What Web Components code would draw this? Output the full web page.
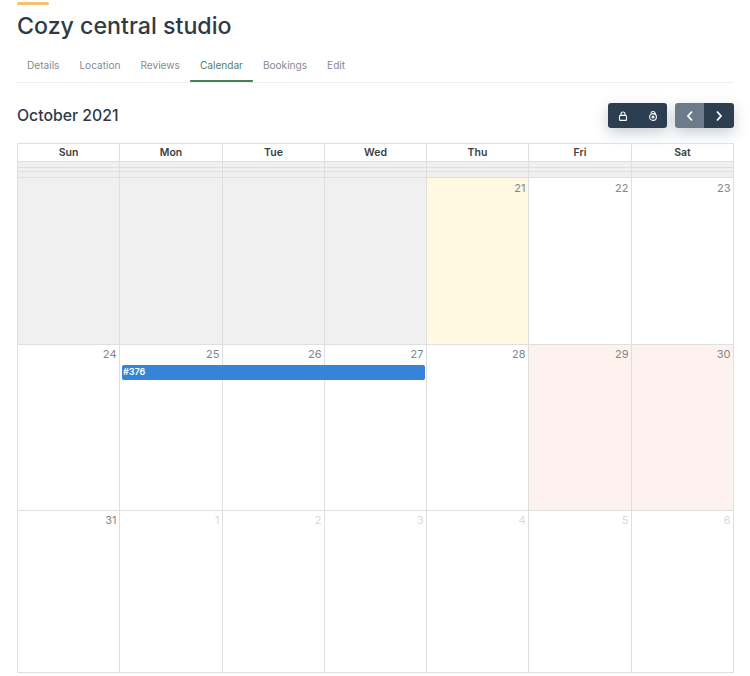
<!DOCTYPE html>
<html>
<head>
<meta charset="utf-8">
<title>Calendar</title>
<style>
    html, body { margin: 0; background: #fff; }
    body { font-family: "Inter", "Liberation Sans", sans-serif; }
</style>
</head>
<body>
<listing-page>
    <listing-header title="Cozy central studio"></listing-header>
    <listing-tabs active="Calendar"></listing-tabs>
    <month-toolbar month="October 2021"></month-toolbar>
    <month-calendar></month-calendar>
</listing-page>

<script>
class ListingPage extends HTMLElement {
    constructor() {
        super();
        this.attachShadow({ mode: "open" });
        this.shadowRoot.innerHTML = `
            <style>
                :host {
                    display: block;
                    width: 717px;
                    margin-left: 17px;
                }
            </style>
            <slot></slot>
        `;
    }
}

class ListingHeader extends HTMLElement {
    constructor() {
        super();
        this.attachShadow({ mode: "open" });
        this.shadowRoot.innerHTML = `
            <style>
                :host { display: block; }
                .bar {
                    width: 32px;
                    height: 3px;
                    margin-top: 2px;
                    background: #f6c06c;
                    border-radius: 2px;
                }
                h1 {
                    margin: 5px 0 0;
                    height: 33px;
                    font: 500 23.2px/33px "Inter", sans-serif;
                    color: #2f3a47;
                }
            </style>
            <div class="bar"></div>
            <h1>${this.getAttribute("title")}</h1>
        `;
    }
}

class ListingTabs extends HTMLElement {
    constructor() {
        super();
        this.attachShadow({ mode: "open" });
        const active = this.getAttribute("active");
        const tabs = ["Details", "Location", "Reviews", "Calendar", "Bookings", "Edit"];
        this.shadowRoot.innerHTML = `
            <style>
                :host {
                    display: flex;
                    height: 37px;
                    margin-top: 2px;
                    border-bottom: 1px solid #eef0f0;
                }
                a {
                    display: block;
                    padding: 10px 10px 0;
                    font-size: 10.1px;
                    line-height: 20px;
                    color: #858b93;
                    box-sizing: border-box;
                    height: 37px;
                }
                a.active {
                    color: #55815f;
                    border-bottom: 2px solid #4a8058;
                    border-radius: 1px;
                }
            </style>
            ${tabs.map(t => `<a class="${t === active ? "active" : ""}">${t}</a>`).join("")}
        `;
    }
}

class MonthToolbar extends HTMLElement {
    constructor() {
        super();
        this.attachShadow({ mode: "open" });
        this.shadowRoot.innerHTML = `
            <style>
                :host {
                    display: flex;
                    align-items: center;
                    justify-content: space-between;
                    height: 25px;
                    margin-top: 20px;
                    margin-bottom: 15px;
                }
                h2 {
                    margin: 0;
                    font: 500 15.8px/25px "Inter", sans-serif;
                    color: #2f3a47;
                }
                .groups { display: flex; gap: 8px; }
                .group {
                    display: flex;
                    height: 25px;
                    border-radius: 3px;
                    overflow: hidden;
                    box-shadow: 0 5px 14px rgba(44, 62, 80, 0.25);
                }
                button {
                    all: unset;
                    display: flex;
                    align-items: center;
                    justify-content: center;
                    width: 29px;
                    background: #2c3e50;
                    color: #fff;
                }
                button.wide { width: 30px; }
                button.dim { background: #6c7a89; }
                svg { display: block; fill: none; stroke: currentColor; }
            </style>
            <h2>${this.getAttribute("month")}</h2>
            <div class="groups">
                <div class="group">
                    <button class="wide" aria-label="Lock">
                        <svg width="10" height="10" viewBox="0 0 10 10" stroke-width="1.1">
                            <rect x="1.5" y="4.4" width="7" height="5" rx="1"/>
                            <path d="M3 4.4V3a2 2 0 0 1 4 0v1.4"/>
                        </svg>
                    </button>
                    <button aria-label="Unlock">
                        <svg width="10" height="11" viewBox="0 0 10 11" stroke-width="1.1">
                            <circle cx="5" cy="7" r="3.4"/>
                            <circle cx="5" cy="7" r="1"/>
                            <path d="M2.8 3.2a2.3 2.3 0 0 1 4.4 0v1.2"/>
                        </svg>
                    </button>
                </div>
                <div class="group">
                    <button class="dim" aria-label="Previous">
                        <svg width="8" height="12" viewBox="0 0 8 12" stroke-width="1.8">
                            <path d="M6 1.5 2 6l4 4.5"/>
                        </svg>
                    </button>
                    <button class="wide" aria-label="Next">
                        <svg width="8" height="12" viewBox="0 0 8 12" stroke-width="1.8">
                            <path d="M2 1.5 6 6l-4 4.5"/>
                        </svg>
                    </button>
                </div>
            </div>
        `;
    }
}

class CalendarDay extends HTMLElement {
    constructor() {
        super();
        this.attachShadow({ mode: "open" });
        this.shadowRoot.innerHTML = `
            <style>
                :host {
                    display: block;
                    box-sizing: border-box;
                    min-width: 0;
                    padding: var(--day-top, 2px) 2.5px 0 0;
                    border-right: 1px solid #dfdfdf;
                    border-bottom: 1px solid #dfdfdf;
                    text-align: right;
                    font-size: 11px;
                    line-height: 14px;
                    color: #83878c;
                }
                :host(:last-child) { border-right: 0; }
                :host([last]) { border-bottom: 0; }
                :host([state="past"]) { background: #f0f0f0; }
                :host([state="today"]) { background: #fef9e0; }
                :host([state="weekend"]) { background: #fef2ef; }
                :host([state="other"]) { color: #d8dadc; }
            </style>
            <slot></slot>
        `;
    }
}

class MonthCalendar extends HTMLElement {
    constructor() {
        super();
        this.attachShadow({ mode: "open" });
        const names = ["Sun", "Mon", "Tue", "Wed", "Thu", "Fri", "Sat"];
        const weeks = [
            [["", "past"], ["", "past"], ["", "past"], ["", "past"], ["21", "today"], ["22", ""], ["23", ""]],
            [["24", ""], ["25", ""], ["26", ""], ["27", ""], ["28", ""], ["29", "weekend"], ["30", "weekend"]],
            [["31", ""], ["1", "other"], ["2", "other"], ["3", "other"], ["4", "other"], ["5", "other"], ["6", "other"]]
        ];
        const weekHeights = [167, 166, 161];
        const thin = [6, 4, 6];
        this.shadowRoot.innerHTML = `
            <style>
                :host {
                    display: block;
                    box-sizing: border-box;
                    width: 717px;
                    height: 530px;
                    border: 1px solid #dfdfdf;
                    position: relative;
                }
                .row {
                    display: grid;
                    grid-template-columns: 102px 103px 102px 102px 102px 103px 101px;
                }
                .names div {
                    height: 18px;
                    box-sizing: border-box;
                    border-right: 1px solid #dfdfdf;
                    border-bottom: 1px solid #dfdfdf;
                    text-align: center;
                    font-size: 10.5px;
                    font-weight: 600;
                    line-height: 17px;
                    color: #3a3f45;
                }
                .names div:last-child { border-right: 0; }
                .thin div {
                    box-sizing: border-box;
                    background: #f0f0f0;
                    border-right: 1px solid #dfdfdf;
                    border-bottom: 1px solid #dfdfdf;
                }
                .thin div:last-child { border-right: 0; }
                .event {
                    position: absolute;
                    left: 104px;
                    top: 221px;
                    width: 303px;
                    height: 15px;
                    box-sizing: border-box;
                    padding-left: 1px;
                    background: #3584d8;
                    border-radius: 2px;
                    color: #fff;
                    font-size: 9px;
                    font-weight: 600;
                    line-height: 14px;
                }
            </style>
            <div class="row names">${names.map(n => `<div>${n}</div>`).join("")}</div>
            ${thin.map(h => `<div class="row thin">${names.map(() => `<div style="height:${h}px"></div>`).join("")}</div>`).join("")}
            ${weeks.map((w, i) => `
                <div class="row" style="height:${weekHeights[i]}px; --day-top:${i === 0 ? 3 : 2}px">
                    ${w.map(d => `<calendar-day state="${d[1]}" ${i === 2 ? "last" : ""}>${d[0]}</calendar-day>`).join("")}
                </div>
            `).join("")}
            <div class="event">#376</div>
        `;
    }
}

customElements.define("listing-page", ListingPage);
customElements.define("listing-header", ListingHeader);
customElements.define("listing-tabs", ListingTabs);
customElements.define("month-toolbar", MonthToolbar);
customElements.define("calendar-day", CalendarDay);
customElements.define("month-calendar", MonthCalendar);
</script>
</body>
</html>
